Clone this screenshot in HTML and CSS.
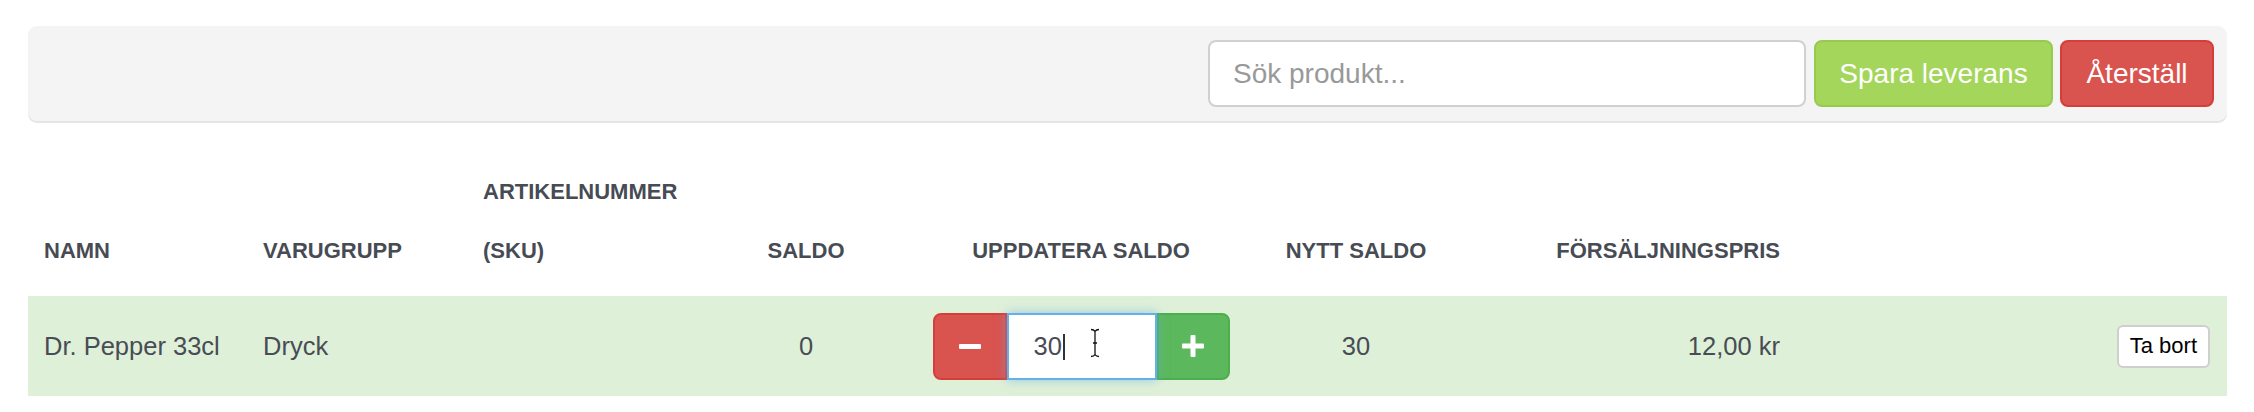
FILE: index.html
```html
<!DOCTYPE html>
<html lang="sv">
<head>
    <meta charset="UTF-8">
    <meta name="viewport" content="width=device-width, initial-scale=1.0">
    <title>Leverans</title>
    <link rel="stylesheet" href="styles.css">
</head>
<body>

<div class="page">
    <div class="toolbar">
        <input type="text" class="search" placeholder="Sök produkt...">
        <button class="btn btn-save">Spara leverans</button>
        <button class="btn btn-reset">Återställ</button>
    </div>

    <table class="delivery">
        <colgroup>
            <col class="c-name">
            <col class="c-group">
            <col class="c-sku">
            <col class="c-stock">
            <col class="c-update">
            <col class="c-new">
            <col class="c-price">
            <col class="c-action">
        </colgroup>
        <thead>
            <tr>
                <th>NAMN</th>
                <th>VARUGRUPP</th>
                <th>ARTIKELNUMMER<br>(SKU)</th>
                <th class="center">SALDO</th>
                <th class="center">UPPDATERA SALDO</th>
                <th class="center">NYTT SALDO</th>
                <th class="right">FÖRSÄLJNINGSPRIS</th>
                <th></th>
            </tr>
        </thead>
        <tbody>
            <tr class="row-ok">
                <td>Dr. Pepper 33cl</td>
                <td>Dryck</td>
                <td></td>
                <td class="center">0</td>
                <td class="center">
                    <div class="stepper">
                        <button class="step step-minus"><span class="minus"></span></button>
                        <div class="qty-wrap">
                            <input type="text" class="qty" value="30">
                            <span class="caret"></span>
                            <svg class="ibeam" width="10" height="30" viewBox="0 0 10 30">
                                <path d="M1 1.5c2 0 3.2.6 4 1.8.8-1.2 2-1.8 4-1.8M5 3.3v23.4M1 28.5c2 0 3.2-.6 4-1.8.8 1.2 2 1.8 4 1.8M3 15h4" stroke="#fff" stroke-width="3" fill="none"/>
                                <path d="M1 1.5c2 0 3.2.6 4 1.8.8-1.2 2-1.8 4-1.8M5 3.3v23.4M1 28.5c2 0 3.2-.6 4-1.8.8 1.2 2 1.8 4 1.8M3 15h4" stroke="#111" stroke-width="1.3" fill="none"/>
                            </svg>
                        </div>
                        <button class="step step-plus">
                            <svg width="22" height="22" viewBox="0 0 22 22">
                                <rect x="8.5" y="0" width="5" height="22" rx="1" fill="#fff"/>
                                <rect x="0" y="8.5" width="22" height="5" rx="1" fill="#fff"/>
                            </svg>
                        </button>
                    </div>
                </td>
                <td class="center">30</td>
                <td class="right">12,00 kr</td>
                <td class="right action"><button class="btn-remove">Ta bort</button></td>
            </tr>
        </tbody>
    </table>
</div>

</body>
</html>
```

FILE: styles.css
```css
* {
    margin: 0;
    padding: 0;
    box-sizing: border-box;
}

body {
    font-family: 'Liberation Sans', Helvetica, Arial, sans-serif;
    background-color: #fff;
    color: #484c55;
}

.page {
    padding: 26px 27px 0 28px;
}

/* top bar with search and actions */
.toolbar {
    display: flex;
    justify-content: flex-end;
    gap: 8px;
    padding: 14px 13px;
    background-color: #f4f4f4;
    border-radius: 9px;
    box-shadow: 0 2px 0 #e5e5e5;
    margin-bottom: 41px;
}

.search {
    width: 598px;
    height: 67px;
    padding: 0 23px;
    border: 2px solid #d0d0d0;
    border-radius: 8px;
    background-color: #fff;
    font-family: inherit;
    font-size: 28px;
    color: #555;
}

.search::placeholder {
    color: #999;
}

.btn {
    height: 67px;
    border: 2px solid transparent;
    border-radius: 8px;
    color: #fff;
    font-family: inherit;
    font-size: 28px;
    cursor: pointer;
}

.btn-save {
    width: 239px;
    background-color: #a4d65c;
    border-color: #98ca4e;
}

.btn-reset {
    width: 154px;
    margin-left: -1px;
    background-color: #d9534f;
    border-color: #d43f3a;
}

/* product table */
.delivery {
    width: 100%;
    table-layout: fixed;
    border-collapse: collapse;
    border-spacing: 0;
}

.c-name { width: 219px; }
.c-group { width: 220px; }
.c-sku { width: 263px; }
.c-stock { width: 152px; }
.c-update { width: 398px; }
.c-new { width: 152px; }
.c-price { width: 364px; }
.c-action { width: 431px; }

.delivery th {
    font-size: 22px;
    font-weight: bold;
    line-height: 59px;
    text-align: left;
    vertical-align: bottom;
    padding: 0 16px 16px;
    color: #474b54;
    white-space: nowrap;
}

.delivery th.center {
    padding-left: 0;
    padding-right: 0;
}

.delivery td {
    height: 100px;
    padding: 0 16px;
    font-size: 25.5px;
    vertical-align: middle;
    white-space: nowrap;
}

.row-ok td {
    background-color: #dff0d8;
}

.delivery .center {
    text-align: center;
}

.delivery .right {
    text-align: right;
}

.delivery td.action {
    padding-right: 17px;
}

/* quantity stepper */
.stepper {
    display: inline-flex;
    vertical-align: middle;
}

.step {
    width: 74px;
    height: 67px;
    border: 2px solid transparent;
    display: flex;
    align-items: center;
    justify-content: center;
    cursor: pointer;
}

.step-minus {
    background-color: #d9534f;
    border-color: #d43f3a;
    border-radius: 8px 0 0 8px;
}

.step-plus {
    width: 73px;
    background-color: #5cb85c;
    border-color: #4cae4c;
    border-radius: 0 8px 8px 0;
}

.minus {
    display: block;
    width: 22px;
    height: 5px;
    border-radius: 1px;
    background-color: #fff;
}

.qty-wrap {
    position: relative;
}

.qty {
    display: block;
    width: 150px;
    height: 67px;
    padding: 0 25px;
    border: 2px solid #66afe9;
    background-color: #fff;
    box-shadow: 0 0 10px rgba(102, 175, 233, 0.6);
    font-family: inherit;
    font-size: 25.5px;
    color: #484c55;
    outline: none;
}

.caret {
    position: absolute;
    left: 56px;
    top: 21px;
    width: 2px;
    height: 26px;
    background-color: #333;
}

.ibeam {
    position: absolute;
    left: 83px;
    top: 15px;
}

.btn-remove {
    height: 43px;
    padding: 0 11px;
    background-color: #fff;
    border: 2px solid #cfcfcf;
    border-radius: 6px;
    font-family: inherit;
    font-size: 22px;
    color: #000;
    vertical-align: middle;
    cursor: pointer;
}
```
